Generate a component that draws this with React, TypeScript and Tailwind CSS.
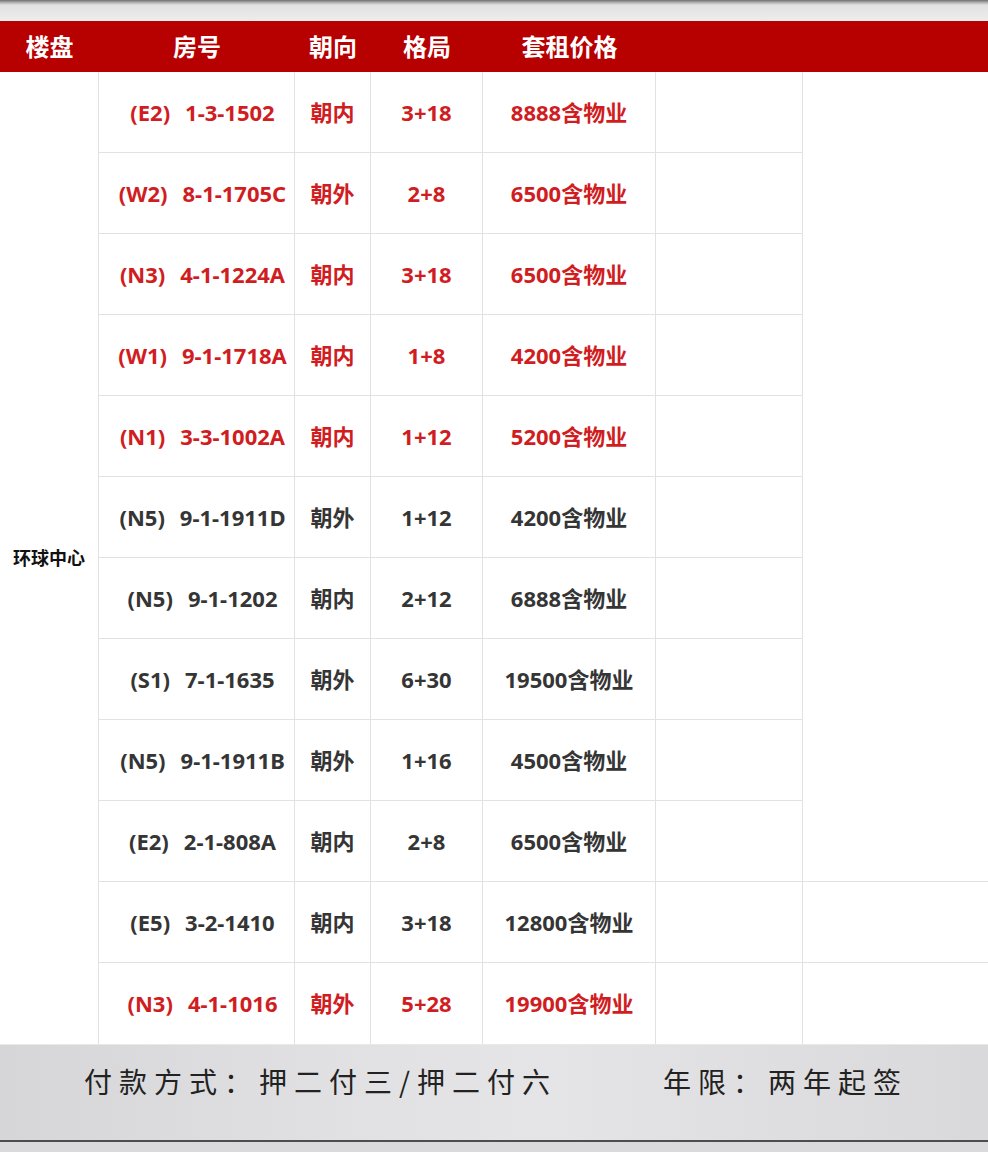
import React from "react"

type Row = {
  code: string
  room: string
  facing: string
  layout: string
  price: string
  red?: boolean
}

const rows: Row[] = [
  { code: "(E2)", room: "1-3-1502", facing: "朝内", layout: "3+18", price: "8888含物业", red: true },
  { code: "(W2)", room: "8-1-1705C", facing: "朝外", layout: "2+8", price: "6500含物业", red: true },
  { code: "(N3)", room: "4-1-1224A", facing: "朝内", layout: "3+18", price: "6500含物业", red: true },
  { code: "(W1)", room: "9-1-1718A", facing: "朝内", layout: "1+8", price: "4200含物业", red: true },
  { code: "(N1)", room: "3-3-1002A", facing: "朝内", layout: "1+12", price: "5200含物业", red: true },
  { code: "(N5)", room: "9-1-1911D", facing: "朝外", layout: "1+12", price: "4200含物业" },
  { code: "(N5)", room: "9-1-1202", facing: "朝内", layout: "2+12", price: "6888含物业" },
  { code: "(S1)", room: "7-1-1635", facing: "朝外", layout: "6+30", price: "19500含物业" },
  { code: "(N5)", room: "9-1-1911B", facing: "朝外", layout: "1+16", price: "4500含物业" },
  { code: "(E2)", room: "2-1-808A", facing: "朝内", layout: "2+8", price: "6500含物业" },
  { code: "(E5)", room: "3-2-1410", facing: "朝内", layout: "3+18", price: "12800含物业" },
  { code: "(N3)", room: "4-1-1016", facing: "朝外", layout: "5+28", price: "19900含物业", red: true },
]

const font = { fontFamily: '"Noto Sans", "Noto Sans CJK SC", sans-serif' }

export default function App() {
  return (
    <div className="w-[988px] h-[1152px] bg-white flex flex-col overflow-hidden" style={font}>
      {/* top edge of the backdrop */}
      <div className="h-[21px] bg-[linear-gradient(to_bottom,#6e6e6e_0px,#a5a5a5_2px,#e2e2e2_5px,#ededed_100%)]" />

      {/* header */}
      <div className="h-[51px] bg-[#b70000] grid grid-cols-[99px_196px_76px_112px_173px_147px_1fr] items-center text-white text-[24px] font-bold">
        <div className="text-center">楼盘</div>
        <div className="text-center">房号</div>
        <div className="text-center">朝向</div>
        <div className="text-center">格局</div>
        <div className="text-center">套租价格</div>
        <div />
        <div />
      </div>

      {/* body */}
      <div className="grid grid-cols-[99px_196px_76px_112px_173px_147px_1fr] grid-rows-[repeat(12,81px)] text-[22px] font-bold">
        <div className="row-span-12 flex items-center justify-center border-r border-[#e2e2e2] text-[18px] text-[#111]">
          环球中心
        </div>
        {rows.map((r, i) => {
          const color = r.red ? "text-[#d01d22]" : "text-[#353535]"
          const bottom = i < rows.length - 1 ? "border-b" : ""
          const cell = `flex items-center justify-center whitespace-nowrap border-r border-[#e2e2e2] ${bottom} ${color}`
          return (
            <React.Fragment key={i}>
              <div className={`${cell} pl-[12px]`}>
                <span>{r.code}</span>
                <span className="ml-[15px]">{r.room}</span>
              </div>
              <div className={cell}>{r.facing}</div>
              <div className={cell}>{r.layout}</div>
              <div className={cell}>{r.price}</div>
              <div className={cell} />
              <div className={i === 9 || i === 10 ? "border-b border-[#e2e2e2]" : ""} />
            </React.Fragment>
          )
        })}
      </div>

      {/* payment band */}
      <div className="h-[108px] flex flex-col border-t border-[#e9e9e9] bg-[linear-gradient(90deg,#d6d6d8_0%,#e1e1e3_35%,#e5e5e7_55%,#dedee0_80%,#d9d9db_100%)]">
        <div
          className="h-[71px] grid grid-cols-[663px_1fr] items-center text-[28px] font-normal tracking-[7px] text-[#222]"
          style={{ fontFamily: '"Noto Sans CJK SC", sans-serif' }}
        >
          <div className="pl-[84px] whitespace-nowrap">付款方式：押二付三/押二付六</div>
          <div className="whitespace-nowrap">年限：两年起签</div>
        </div>
        <div className="h-[24px]" />
        <div className="h-[2px] bg-[#4d4d4f]" />
        <div className="flex-1 bg-[#dadadc]" />
      </div>
    </div>
  )
}
